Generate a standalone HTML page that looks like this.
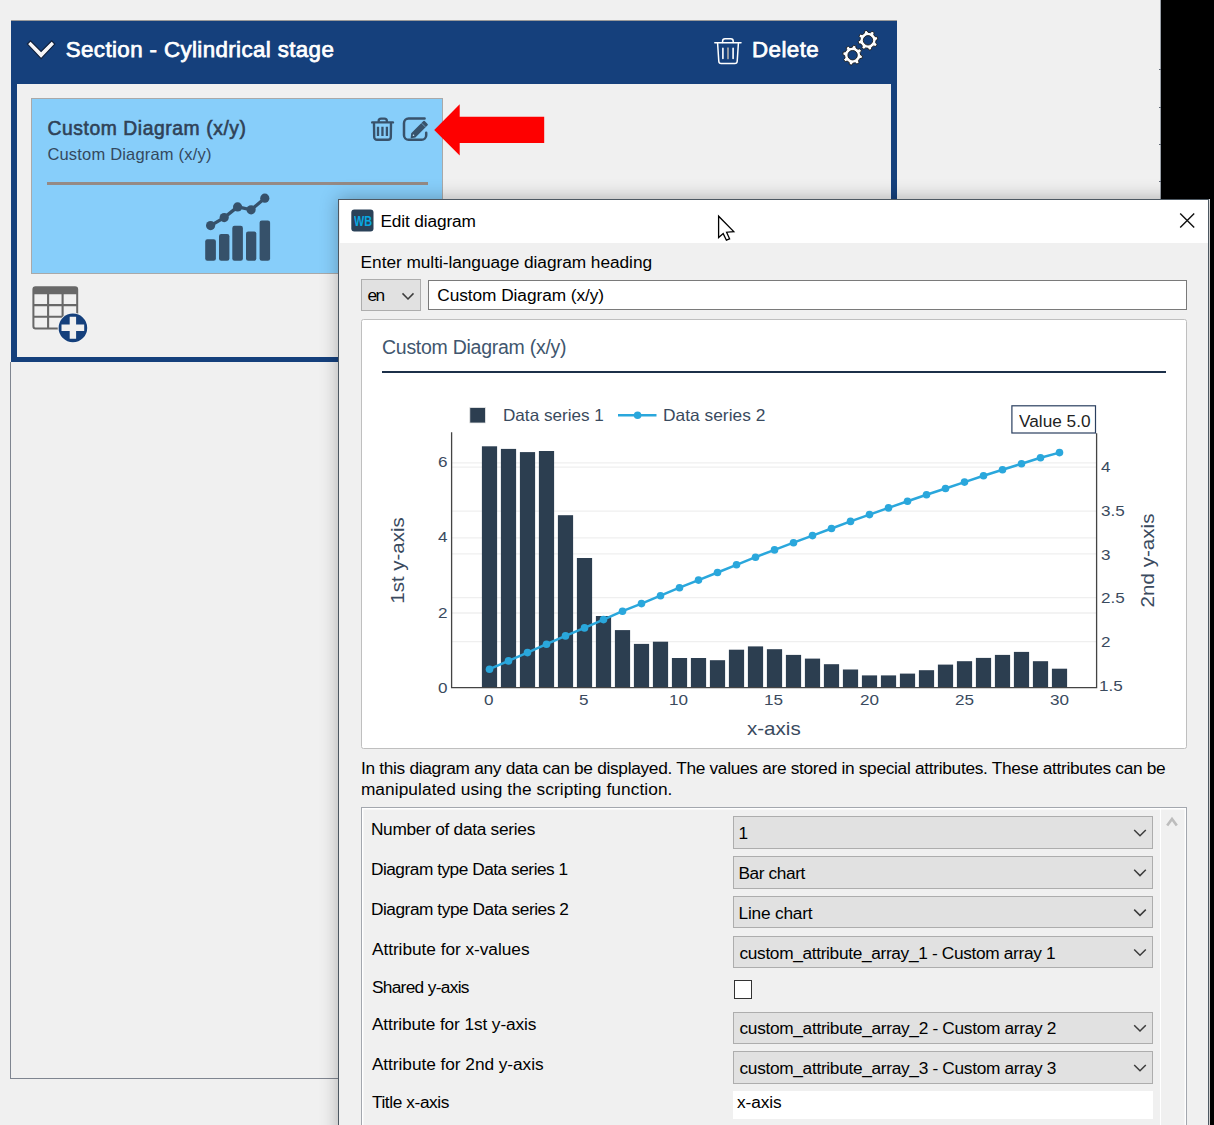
<!DOCTYPE html>
<html lang="en">
<head>
<meta charset="utf-8">
<title>Edit diagram</title>
<style>
html,body{margin:0;padding:0;}
body{width:1214px;height:1125px;overflow:hidden;background:#f0f0f0;font-family:"Liberation Sans",sans-serif;}
#screen{position:relative;width:1214px;height:1125px;overflow:hidden;background:#f0f0f0;}
.abs{position:absolute;}
.t{position:absolute;white-space:pre;font-family:"Liberation Sans",sans-serif;}
.combo{position:absolute;box-sizing:border-box;background:#e1e1e1;border:1.7px solid #adadad;}
</style>
</head>
<body>
<div id="screen">
<!-- ===== background application window ===== -->
<div class="abs" id="blackR" style="left:1161px;top:0;width:53px;height:199px;background:#000"></div>
<div class="abs" style="left:1160px;top:0;width:1.3px;height:199px;background:#9aa0a8"></div>
<div class="abs" style="left:1158.6px;top:68.6px;width:2.4px;height:1.2px;background:#5d6674"></div><div class="abs" style="left:1158.6px;top:107px;width:2.4px;height:1.2px;background:#5d6674"></div><div class="abs" style="left:1158.6px;top:143.8px;width:2.4px;height:1.2px;background:#5d6674"></div><div class="abs" style="left:1158.6px;top:180.8px;width:2.4px;height:1.2px;background:#5d6674"></div>
<div class="abs" id="blackR2" style="left:1209.6px;top:199px;width:5px;height:926px;background:#000"></div>

<!-- lower empty panel outline -->
<div class="abs" style="left:10.4px;top:362px;width:400px;height:717px;box-sizing:border-box;border-left:1.2px solid #7f8590;border-bottom:1.2px solid #7f8590;"></div>

<!-- section panel -->
<div class="abs" id="section" style="left:10.6px;top:20px;width:886.4px;height:342px;background:#15407c;"></div>
<div class="abs" style="left:10.6px;top:20px;width:886.4px;height:1px;background:#9a9a9a;"></div>
<div class="abs" id="sectionInner" style="left:16.9px;top:83.5px;width:874.2px;height:273.8px;background:#f0f0f0;"></div>

<!-- card -->
<div class="abs" id="card" style="left:31.4px;top:98.2px;width:411.8px;height:175.6px;box-sizing:border-box;background:#87cefa;border:1.3px solid #a9a9a9;"></div>
<div class="abs" style="left:47px;top:181.9px;width:381px;height:2.8px;background:#958a85;"></div>

<svg class="abs" style="left:0;top:0" width="1214" height="1125" viewBox="0 0 1214 1125">
<path d="M27.4 44.0L30.5 40.9L41.1 51.5L51.7 40.9L54.8 44.0L41.1 58.7Z" fill="#f6f6f8" stroke="#0e1e3a" stroke-width="1.1" stroke-linejoin="miter"/>
<g fill="none" stroke="#fff" stroke-width="1.5" stroke-linecap="round" stroke-linejoin="round"><path d="M714.8 42.8H741"/><path d="M722.6 42.6V41.2a2.4 2.4 0 0 1 2.4-2.4h5.8a2.4 2.4 0 0 1 2.4 2.4V42.6"/><path d="M717.6 43.2L718.8 61.2a2.4 2.4 0 0 0 2.4 2.3h13.6a2.4 2.4 0 0 0 2.4-2.3L738.4 43.2"/><path d="M722.9 48.2V58.4M733.1 48.2V58.4" stroke-width="1.6"/><path d="M728 48.2V58.4" stroke="#a8a8a8" stroke-width="1.7"/></g>
<path d="M860.59 54.92 L862.48 55.86 L861.95 58.44 L859.85 58.58 L858.45 60.65 L859.12 62.65 L856.92 64.11 L855.34 62.72 L852.88 63.19 L851.94 65.08 L849.36 64.55 L849.22 62.45 L847.15 61.05 L845.15 61.72 L843.69 59.52 L845.08 57.94 L844.61 55.48 L842.72 54.54 L843.25 51.96 L845.35 51.82 L846.75 49.75 L846.08 47.75 L848.28 46.29 L849.86 47.68 L852.32 47.21 L853.26 45.32 L855.84 45.85 L855.98 47.95 L858.05 49.35 L860.05 48.68 L861.51 50.88 L860.12 52.46Z M857.30 55.20 A4.7 4.7 0 1 0 847.90 55.20 A4.7 4.7 0 1 0 857.30 55.20Z" fill="#fff" fill-rule="evenodd" stroke="#1b1b1b" stroke-width="0.9" stroke-linejoin="round"/>
<path d="M875.61 42.77 L877.05 44.31 L875.68 46.55 L873.66 45.96 L871.63 47.43 L871.57 49.53 L869.01 50.15 L868.00 48.30 L865.53 47.91 L863.99 49.35 L861.75 47.98 L862.34 45.96 L860.87 43.93 L858.77 43.87 L858.15 41.31 L860.00 40.30 L860.39 37.83 L858.95 36.29 L860.32 34.05 L862.34 34.64 L864.37 33.17 L864.43 31.07 L866.99 30.45 L868.00 32.30 L870.47 32.69 L872.01 31.25 L874.25 32.62 L873.66 34.64 L875.13 36.67 L877.23 36.73 L877.85 39.29 L876.00 40.30Z M872.70 40.30 A4.7 4.7 0 1 0 863.30 40.30 A4.7 4.7 0 1 0 872.70 40.30Z" fill="#fff" fill-rule="evenodd" stroke="#1b1b1b" stroke-width="0.9" stroke-linejoin="round"/>
<g fill="none" stroke="#38526b" stroke-width="2.3" stroke-linecap="round" stroke-linejoin="round"><path d="M372.2 122.4H392.9" stroke-width="2.4"/><path d="M378.6 121.6V121.2a2.5 2.5 0 0 1 2.5-2.5h3.3a2.5 2.5 0 0 1 2.5 2.5V121.6"/><path d="M374 123.4L374.2 137a2.8 2.8 0 0 0 2.8 2.8h11a2.8 2.8 0 0 0 2.8-2.8L391 123.4" stroke-width="2.4"/><path d="M378 126.8V135.9M382.45 126.8V135.9M386.9 126.8V135.9" stroke-width="2.3" stroke-linecap="butt"/></g>
<path d="M424.6 118.6H408.6a4.6 4.6 0 0 0-4.6 4.6V135.2a4.6 4.6 0 0 0 4.6 4.6H421.6a4.6 4.6 0 0 0 4.6-4.6V132.8" fill="none" stroke="#38526b" stroke-width="2.5" stroke-linecap="round" stroke-linejoin="round"/>
<path d="M410.7 137.6 L411.2 133.2 L423.4 121 a0.9 0.9 0 0 1 1.3 0 L427.6 123.9 a0.9 0.9 0 0 1 0 1.3 L415.4 137.4 L411.3 138.2 a0.5 0.5 0 0 1 -0.6 -0.6 Z" fill="#38526b"/>
<path d="M421.6 123.2l3.7 3.7" stroke="#87cefa" stroke-width="0.8" opacity=".75"/><circle cx="413.5" cy="135.3" r="0.8" fill="#cfe9fb"/>
<path d="M434.2 129.9L459.7 104.2V116.8H544.2V142.9H459.7V155.6Z" fill="#fe0000"/>
<rect x="205.2" y="239.3" width="10.7" height="21.5" rx="2.2" fill="#36516a"/>
<rect x="219.0" y="234.1" width="10.4" height="26.7" rx="2.2" fill="#36516a"/>
<rect x="232.3" y="225.8" width="10.6" height="35.0" rx="2.2" fill="#36516a"/>
<rect x="246.0" y="231.4" width="10.3" height="29.4" rx="2.2" fill="#36516a"/>
<rect x="259.6" y="220.5" width="10.5" height="40.3" rx="2.2" fill="#36516a"/>
<polyline points="210.6,225.6 224.2,217.6 237.6,206.9 251.1,209.8 264.8,198.2" fill="none" stroke="#36516a" stroke-width="3.3"/>
<circle cx="210.6" cy="225.6" r="4.6" fill="#36516a"/>
<circle cx="224.2" cy="217.6" r="4.6" fill="#36516a"/>
<circle cx="237.6" cy="206.9" r="4.6" fill="#36516a"/>
<circle cx="251.1" cy="209.8" r="4.6" fill="#36516a"/>
<circle cx="264.8" cy="198.2" r="4.6" fill="#36516a"/>
<rect x="33.4" y="287.3" width="43.8" height="41.2" rx="2.2" fill="none" stroke="#686868" stroke-width="2"/>
<path d="M33.4 294.2V289a1.7 1.7 0 0 1 1.7-1.7H75.5a1.7 1.7 0 0 1 1.7 1.7V294.2Z" fill="#686868"/>
<path d="M48.1 293V328.4M62.6 293V328.4M33.4 305.1H77.2M33.4 316.7H77.2" stroke="#686868" stroke-width="2.1" fill="none"/>
<circle cx="72.9" cy="327.9" r="15.2" fill="#f4f4f4"/><circle cx="72.9" cy="327.9" r="14.3" fill="#15407c"/>
<path d="M69.7 316.8H76.1V324.6H84.2V331.1H76.1V338.7H69.7V331.1H61.5V324.6H69.7Z" fill="#f0f0f0"/>
</svg>

<!-- ===== dialog ===== -->
<div class="abs" id="dlgShadow" style="left:339px;top:199.2px;width:870.4px;height:940px;box-shadow:0 0 17px 1px rgba(0,0,0,.27);"></div>
<div class="abs" id="dlg" style="left:338.3px;top:198.9px;width:871.1px;height:940px;box-sizing:border-box;background:#f0f0f0;border:1.5px solid #4d5862;"></div>
<div class="abs" id="dlgTitle" style="left:339.8px;top:200px;width:868.6px;height:43.3px;background:#fff;"></div>

<!-- heading row -->
<div class="combo" style="left:361.2px;top:279.2px;width:59.4px;height:31.4px;"></div>
<div class="abs" id="headInput" style="left:427.8px;top:280.3px;width:759.2px;height:29.4px;box-sizing:border-box;background:#fff;border:1.7px solid #7a7a7a;"></div>

<!-- chart panel -->
<div class="abs" id="chartPanel" style="left:360.8px;top:318.6px;width:826.4px;height:430.6px;box-sizing:border-box;background:#fff;border:1.6px solid #bfbfbf;border-radius:2.5px;"></div>
<div class="abs" style="left:381.8px;top:370.9px;width:784.4px;height:2.5px;background:#1c3049;"></div>
<svg class="abs" style="left:0;top:0" width="1214" height="1125" viewBox="0 0 1214 1125">
<line x1="452" x2="1096" y1="462.9" y2="462.9" stroke="#efefef" stroke-width="1.3"/>
<line x1="452" x2="1096" y1="537.9" y2="537.9" stroke="#efefef" stroke-width="1.3"/>
<line x1="452" x2="1096" y1="613.0" y2="613.0" stroke="#efefef" stroke-width="1.3"/>
<line x1="452" x2="1096" y1="467.1" y2="467.1" stroke="#efefef" stroke-width="1.3"/>
<line x1="452" x2="1096" y1="511.2" y2="511.2" stroke="#efefef" stroke-width="1.3"/>
<line x1="452" x2="1096" y1="553.8" y2="553.8" stroke="#efefef" stroke-width="1.3"/>
<line x1="452" x2="1096" y1="597.6" y2="597.6" stroke="#efefef" stroke-width="1.3"/>
<line x1="452" x2="1096" y1="641.6" y2="641.6" stroke="#efefef" stroke-width="1.3"/>
<rect x="481.9" y="446.3" width="15.2" height="241.3" fill="#2c3e50"/>
<rect x="500.9" y="448.9" width="15.2" height="238.7" fill="#2c3e50"/>
<rect x="519.9" y="452.1" width="15.2" height="235.5" fill="#2c3e50"/>
<rect x="538.9" y="451.0" width="15.2" height="236.6" fill="#2c3e50"/>
<rect x="557.9" y="515.2" width="15.2" height="172.4" fill="#2c3e50"/>
<rect x="576.9" y="558.0" width="15.2" height="129.6" fill="#2c3e50"/>
<rect x="595.9" y="616.0" width="15.2" height="71.6" fill="#2c3e50"/>
<rect x="614.9" y="630.1" width="15.2" height="57.5" fill="#2c3e50"/>
<rect x="633.9" y="643.9" width="15.2" height="43.7" fill="#2c3e50"/>
<rect x="652.9" y="641.7" width="15.2" height="45.9" fill="#2c3e50"/>
<rect x="671.9" y="658.0" width="15.2" height="29.6" fill="#2c3e50"/>
<rect x="690.9" y="658.0" width="15.2" height="29.6" fill="#2c3e50"/>
<rect x="709.9" y="660.2" width="15.2" height="27.4" fill="#2c3e50"/>
<rect x="728.9" y="649.7" width="15.2" height="37.9" fill="#2c3e50"/>
<rect x="747.9" y="646.4" width="15.2" height="41.2" fill="#2c3e50"/>
<rect x="766.9" y="649.2" width="15.2" height="38.4" fill="#2c3e50"/>
<rect x="785.9" y="654.9" width="15.2" height="32.7" fill="#2c3e50"/>
<rect x="804.9" y="658.6" width="15.2" height="29.0" fill="#2c3e50"/>
<rect x="823.9" y="664.2" width="15.2" height="23.4" fill="#2c3e50"/>
<rect x="842.9" y="669.5" width="15.2" height="18.1" fill="#2c3e50"/>
<rect x="861.9" y="675.4" width="15.2" height="12.2" fill="#2c3e50"/>
<rect x="880.9" y="675.4" width="15.2" height="12.2" fill="#2c3e50"/>
<rect x="899.9" y="673.6" width="15.2" height="14.0" fill="#2c3e50"/>
<rect x="918.9" y="670.2" width="15.2" height="17.4" fill="#2c3e50"/>
<rect x="937.9" y="664.6" width="15.2" height="23.0" fill="#2c3e50"/>
<rect x="956.9" y="661.2" width="15.2" height="26.4" fill="#2c3e50"/>
<rect x="975.9" y="657.9" width="15.2" height="29.7" fill="#2c3e50"/>
<rect x="994.9" y="654.9" width="15.2" height="32.7" fill="#2c3e50"/>
<rect x="1013.9" y="651.9" width="15.2" height="35.7" fill="#2c3e50"/>
<rect x="1032.9" y="661.2" width="15.2" height="26.4" fill="#2c3e50"/>
<rect x="1051.9" y="668.7" width="15.2" height="18.9" fill="#2c3e50"/>
<polyline points="489.5,669.2 508.5,660.9 527.5,652.6 546.5,644.2 565.5,635.9 584.5,627.9 603.5,619.6 622.5,611.2 641.5,603.6 660.5,595.7 679.5,587.7 698.5,580.1 717.5,572.5 736.5,564.8 755.5,557.2 774.5,549.9 793.5,542.7 812.5,535.6 831.5,528.5 850.5,521.4 869.5,514.6 888.5,507.9 907.5,501.2 926.5,494.8 945.5,488.5 964.5,482.1 983.5,475.7 1002.5,469.8 1021.5,463.8 1040.5,457.8 1059.5,452.6" fill="none" stroke="#2aa7dc" stroke-width="2.5" stroke-linejoin="round"/>
<circle cx="489.5" cy="669.2" r="3.8" fill="#2aa7dc"/>
<circle cx="508.5" cy="660.9" r="3.8" fill="#2aa7dc"/>
<circle cx="527.5" cy="652.6" r="3.8" fill="#2aa7dc"/>
<circle cx="546.5" cy="644.2" r="3.8" fill="#2aa7dc"/>
<circle cx="565.5" cy="635.9" r="3.8" fill="#2aa7dc"/>
<circle cx="584.5" cy="627.9" r="3.8" fill="#2aa7dc"/>
<circle cx="603.5" cy="619.6" r="3.8" fill="#2aa7dc"/>
<circle cx="622.5" cy="611.2" r="3.8" fill="#2aa7dc"/>
<circle cx="641.5" cy="603.6" r="3.8" fill="#2aa7dc"/>
<circle cx="660.5" cy="595.7" r="3.8" fill="#2aa7dc"/>
<circle cx="679.5" cy="587.7" r="3.8" fill="#2aa7dc"/>
<circle cx="698.5" cy="580.1" r="3.8" fill="#2aa7dc"/>
<circle cx="717.5" cy="572.5" r="3.8" fill="#2aa7dc"/>
<circle cx="736.5" cy="564.8" r="3.8" fill="#2aa7dc"/>
<circle cx="755.5" cy="557.2" r="3.8" fill="#2aa7dc"/>
<circle cx="774.5" cy="549.9" r="3.8" fill="#2aa7dc"/>
<circle cx="793.5" cy="542.7" r="3.8" fill="#2aa7dc"/>
<circle cx="812.5" cy="535.6" r="3.8" fill="#2aa7dc"/>
<circle cx="831.5" cy="528.5" r="3.8" fill="#2aa7dc"/>
<circle cx="850.5" cy="521.4" r="3.8" fill="#2aa7dc"/>
<circle cx="869.5" cy="514.6" r="3.8" fill="#2aa7dc"/>
<circle cx="888.5" cy="507.9" r="3.8" fill="#2aa7dc"/>
<circle cx="907.5" cy="501.2" r="3.8" fill="#2aa7dc"/>
<circle cx="926.5" cy="494.8" r="3.8" fill="#2aa7dc"/>
<circle cx="945.5" cy="488.5" r="3.8" fill="#2aa7dc"/>
<circle cx="964.5" cy="482.1" r="3.8" fill="#2aa7dc"/>
<circle cx="983.5" cy="475.7" r="3.8" fill="#2aa7dc"/>
<circle cx="1002.5" cy="469.8" r="3.8" fill="#2aa7dc"/>
<circle cx="1021.5" cy="463.8" r="3.8" fill="#2aa7dc"/>
<circle cx="1040.5" cy="457.8" r="3.8" fill="#2aa7dc"/>
<circle cx="1059.5" cy="452.6" r="3.8" fill="#2aa7dc"/>
<path d="M451.6 432.3V687.6H1096.6V433.3" fill="none" stroke="#444" stroke-width="1.3"/>
<rect x="469.8" y="407.6" width="15.6" height="15.4" fill="#2c3e50" stroke="#e8e8e8" stroke-width="0.8"/>
<line x1="618" x2="656.5" y1="415.2" y2="415.2" stroke="#2aa7dc" stroke-width="2.5"/><circle cx="637.6" cy="415.2" r="3.8" fill="#2aa7dc"/>
<rect x="1011.9" y="405.8" width="83.6" height="27.2" fill="#fff" stroke="#2a3f5f" stroke-width="1.2"/>
</svg>

<!-- form panel -->
<div class="abs" id="formPanel" style="left:360.8px;top:806.6px;width:826.4px;height:340px;box-sizing:border-box;border:1.5px solid #a3a7ae;background:#f0f0f0;box-shadow:inset 1.4px 1.4px 0 #fff, inset -1.4px 0 0 #fff;"></div>
<div class="abs" style="left:1160.2px;top:809.4px;width:1.3px;height:330px;background:#fff;"></div>
<div class="combo" style="left:733.2px;top:816.4px;width:419.6px;height:32.4px;"></div>
<div class="combo" style="left:733.2px;top:856.2px;width:419.6px;height:32.4px;"></div>
<div class="combo" style="left:733.2px;top:896.0px;width:419.6px;height:32.4px;"></div>
<div class="combo" style="left:733.2px;top:935.9px;width:419.6px;height:32.4px;"></div>
<div class="abs" id="chk" style="left:733.6px;top:980.0px;width:18.6px;height:18.6px;box-sizing:border-box;background:#fff;border:1.4px solid #333;"></div>
<div class="combo" style="left:733.2px;top:1011.6px;width:419.6px;height:32.4px;"></div>
<div class="combo" style="left:733.2px;top:1051.4px;width:419.6px;height:32.4px;"></div>
<div class="abs" id="xaxisInput" style="left:733.2px;top:1090.8px;width:419.6px;height:28.6px;background:#fff;"></div>

<svg class="abs" style="left:0;top:0" width="1214" height="1125" viewBox="0 0 1214 1125">
<rect x="351.3" y="209.5" width="22.2" height="22" rx="3" fill="#2a4158"/>
<path d="M1180.2 213.4L1194.2 227.4M1194.2 213.4L1180.2 227.4" stroke="#111" stroke-width="1.4" fill="none"/>
<path d="M718.6 216.2V237.6L723.2 233.6L726.4 240.2L729.6 238.8L726.6 232.2L733.8 231.6Z" fill="#fff" stroke="#000" stroke-width="1.3" stroke-linejoin="miter"/>
<path d="M402.5 293.4L408.0 299.0L413.5 293.4" fill="none" stroke="#3c3c3c" stroke-width="1.5"/>
<path d="M1134.2 830.0L1140.0 835.8L1145.8 830.0" fill="none" stroke="#3c3c3c" stroke-width="1.5"/>
<path d="M1134.2 869.8L1140.0 875.6L1145.8 869.8" fill="none" stroke="#3c3c3c" stroke-width="1.5"/>
<path d="M1134.2 909.6L1140.0 915.4L1145.8 909.6" fill="none" stroke="#3c3c3c" stroke-width="1.5"/>
<path d="M1134.2 949.5L1140.0 955.3L1145.8 949.5" fill="none" stroke="#3c3c3c" stroke-width="1.5"/>
<path d="M1134.2 1025.2L1140.0 1031.0L1145.8 1025.2" fill="none" stroke="#3c3c3c" stroke-width="1.5"/>
<path d="M1134.2 1065.0L1140.0 1070.8L1145.8 1065.0" fill="none" stroke="#3c3c3c" stroke-width="1.5"/>
<path d="M1167.2 825.6L1172 819L1176.8 825.6" fill="none" stroke="#bdbdbd" stroke-width="2.6" stroke-linejoin="miter"/>
</svg>

<!-- ===== text ===== -->
<span class="t" style="font-size:22.3px;line-height:27px;height:27px;color:#fff;letter-spacing:0.394px;left:65.80px;top:36.00px;-webkit-text-stroke:0.75px #fff;">Section - Cylindrical stage</span>
<span class="t" style="font-size:22.3px;line-height:27px;height:27px;color:#fff;letter-spacing:0.450px;left:752.00px;top:36.00px;-webkit-text-stroke:0.75px #fff;">Delete</span>
<span class="t" style="font-size:19.3px;line-height:23px;height:23px;color:#2f4257;letter-spacing:0.586px;left:47.40px;top:117.00px;-webkit-text-stroke:0.6px #2f4257;">Custom Diagram (x/y)</span>
<span class="t" style="font-size:16.5px;line-height:20px;height:20px;color:#34495e;letter-spacing:0.187px;left:47.40px;top:144.00px;">Custom Diagram (x/y)</span>
<span class="t" style="font-size:17.3px;line-height:22px;height:22px;color:#000;letter-spacing:-0.138px;left:380.40px;top:210.00px;">Edit diagram</span>
<span class="t" style="font-size:17.3px;line-height:22px;height:22px;color:#000;letter-spacing:-0.043px;left:360.60px;top:251.00px;">Enter multi-language diagram heading</span>
<span class="t" style="font-size:17.3px;line-height:22px;height:22px;color:#000;letter-spacing:-1.511px;left:367.40px;top:284.00px;">en</span>
<span class="t" style="font-size:17.3px;line-height:22px;height:22px;color:#000;letter-spacing:-0.067px;left:437.30px;top:284.00px;">Custom Diagram (x/y)</span>
<span class="t" style="font-size:19.5px;line-height:24px;height:24px;color:#41566e;letter-spacing:-0.269px;left:382.00px;top:335.00px;">Custom Diagram (x/y)</span>
<span class="t" style="font-size:17.3px;line-height:22px;height:22px;color:#000;letter-spacing:-0.302px;left:360.90px;top:757.00px;">In this diagram any data can be displayed. The values are stored in special attributes. These attributes can be</span>
<span class="t" style="font-size:17.3px;line-height:22px;height:22px;color:#000;letter-spacing:0.078px;left:360.90px;top:778.00px;">manipulated using the scripting function.</span>
<span class="t" style="font-size:17.3px;line-height:22px;height:22px;color:#000;letter-spacing:-0.279px;left:370.90px;top:818.00px;">Number of data series</span>
<span class="t" style="font-size:17.3px;line-height:22px;height:22px;color:#000;letter-spacing:-0.483px;left:370.90px;top:858.00px;">Diagram type Data series 1</span>
<span class="t" style="font-size:17.3px;line-height:22px;height:22px;color:#000;letter-spacing:-0.455px;left:370.90px;top:898.00px;">Diagram type Data series 2</span>
<span class="t" style="font-size:17.3px;line-height:22px;height:22px;color:#000;letter-spacing:-0.040px;left:371.90px;top:938.00px;">Attribute for x-values</span>
<span class="t" style="font-size:17.3px;line-height:22px;height:22px;color:#000;letter-spacing:-0.676px;left:371.90px;top:976.00px;">Shared y-axis</span>
<span class="t" style="font-size:17.3px;line-height:22px;height:22px;color:#000;letter-spacing:-0.112px;left:371.90px;top:1013.00px;">Attribute for 1st y-axis</span>
<span class="t" style="font-size:17.3px;line-height:22px;height:22px;color:#000;letter-spacing:-0.050px;left:371.90px;top:1053.00px;">Attribute for 2nd y-axis</span>
<span class="t" style="font-size:17.3px;line-height:22px;height:22px;color:#000;letter-spacing:-0.399px;left:371.90px;top:1091.00px;">Title x-axis</span>
<span class="t" style="font-size:17.3px;line-height:22px;height:22px;color:#000;left:738.50px;top:822.00px;">1</span>
<span class="t" style="font-size:17.3px;line-height:22px;height:22px;color:#000;letter-spacing:-0.414px;left:738.50px;top:862.00px;">Bar chart</span>
<span class="t" style="font-size:17.3px;line-height:22px;height:22px;color:#000;letter-spacing:-0.199px;left:738.50px;top:902.00px;">Line chart</span>
<span class="t" style="font-size:17.3px;line-height:22px;height:22px;color:#000;letter-spacing:-0.333px;left:739.50px;top:942.00px;">custom_attribute_array_1 - Custom array 1</span>
<span class="t" style="font-size:17.3px;line-height:22px;height:22px;color:#000;letter-spacing:-0.313px;left:739.50px;top:1017.00px;">custom_attribute_array_2 - Custom array 2</span>
<span class="t" style="font-size:17.3px;line-height:22px;height:22px;color:#000;letter-spacing:-0.313px;left:739.50px;top:1057.00px;">custom_attribute_array_3 - Custom array 3</span>
<span class="t" style="font-size:17.3px;line-height:22px;height:22px;color:#000;letter-spacing:-0.137px;left:737.10px;top:1091.00px;">x-axis</span>
<span class="t" style="font-size:14.6px;line-height:18px;height:18px;color:#08a8e2;font-weight:700;left:353.80px;top:212.00px;transform:scaleX(0.7403);transform-origin:0 0;">WB</span>
<span class="t" style="font-size:16.5px;line-height:20px;height:20px;color:#3a4a5e;left:503.06px;top:405.00px;transform:scaleX(1.0371);transform-origin:0 0;">Data series 1</span>
<span class="t" style="font-size:16.5px;line-height:20px;height:20px;color:#3a4a5e;left:662.55px;top:405.00px;transform:scaleX(1.0527);transform-origin:0 0;">Data series 2</span>
<span class="t" style="font-size:16.3px;line-height:20px;height:20px;color:#222;left:1018.70px;top:411.00px;transform:scaleX(1.0587);transform-origin:0 0;">Value 5.0</span>
<span class="t" style="font-size:18.5px;line-height:23px;height:23px;color:#3a4a5e;left:747.40px;top:717.00px;transform:scaleX(1.1111);transform-origin:0 0;">x-axis</span>
<span class="t" style="font-size:15px;line-height:19px;height:19px;color:#3a4a5e;left:484.44px;top:690.00px;transform:scaleX(1.1400);transform-origin:0 0;">0</span>
<span class="t" style="font-size:15px;line-height:19px;height:19px;color:#3a4a5e;left:579.44px;top:690.00px;transform:scaleX(1.1400);transform-origin:0 0;">5</span>
<span class="t" style="font-size:15px;line-height:19px;height:19px;color:#3a4a5e;left:669.11px;top:690.00px;transform:scaleX(1.1400);transform-origin:0 0;">10</span>
<span class="t" style="font-size:15px;line-height:19px;height:19px;color:#3a4a5e;left:764.11px;top:690.00px;transform:scaleX(1.1400);transform-origin:0 0;">15</span>
<span class="t" style="font-size:15px;line-height:19px;height:19px;color:#3a4a5e;left:859.68px;top:690.00px;transform:scaleX(1.1400);transform-origin:0 0;">20</span>
<span class="t" style="font-size:15px;line-height:19px;height:19px;color:#3a4a5e;left:954.68px;top:690.00px;transform:scaleX(1.1400);transform-origin:0 0;">25</span>
<span class="t" style="font-size:15px;line-height:19px;height:19px;color:#3a4a5e;left:1049.68px;top:690.00px;transform:scaleX(1.1400);transform-origin:0 0;">30</span>
<span class="t" style="font-size:15px;line-height:19px;height:19px;color:#3a4a5e;left:438.48px;top:678.00px;transform:scaleX(1.1400);transform-origin:0 0;">0</span>
<span class="t" style="font-size:15px;line-height:19px;height:19px;color:#3a4a5e;left:438.48px;top:603.00px;transform:scaleX(1.1400);transform-origin:0 0;">2</span>
<span class="t" style="font-size:15px;line-height:19px;height:19px;color:#3a4a5e;left:438.48px;top:527.00px;transform:scaleX(1.1400);transform-origin:0 0;">4</span>
<span class="t" style="font-size:15px;line-height:19px;height:19px;color:#3a4a5e;left:438.48px;top:452.00px;transform:scaleX(1.1400);transform-origin:0 0;">6</span>
<span class="t" style="font-size:15px;line-height:19px;height:19px;color:#3a4a5e;left:1100.60px;top:457.00px;transform:scaleX(1.1400);transform-origin:0 0;">4</span>
<span class="t" style="font-size:15px;line-height:19px;height:19px;color:#3a4a5e;left:1100.60px;top:501.00px;transform:scaleX(1.1400);transform-origin:0 0;">3.5</span>
<span class="t" style="font-size:15px;line-height:19px;height:19px;color:#3a4a5e;left:1100.60px;top:545.00px;transform:scaleX(1.1400);transform-origin:0 0;">3</span>
<span class="t" style="font-size:15px;line-height:19px;height:19px;color:#3a4a5e;left:1100.60px;top:588.00px;transform:scaleX(1.1400);transform-origin:0 0;">2.5</span>
<span class="t" style="font-size:15px;line-height:19px;height:19px;color:#3a4a5e;left:1100.60px;top:632.00px;transform:scaleX(1.1400);transform-origin:0 0;">2</span>
<span class="t" style="font-size:15px;line-height:19px;height:19px;color:#3a4a5e;left:1099.46px;top:676.00px;transform:scaleX(1.1400);transform-origin:0 0;">1.5</span>
<span class="t" style="font-size:18.5px;line-height:23px;height:23px;color:#3a4a5e;left:358.43px;top:548.61px;width:78.14px;transform:rotate(-90deg) scaleX(1.1056);transform-origin:39.07px 11.50px;">1st y-axis</span>
<span class="t" style="font-size:18.5px;line-height:23px;height:23px;color:#3a4a5e;left:1105.34px;top:548.95px;width:84.33px;transform:rotate(-90deg) scaleX(1.1134);transform-origin:42.16px 11.50px;">2nd y-axis</span>
</div>
</body>
</html>
